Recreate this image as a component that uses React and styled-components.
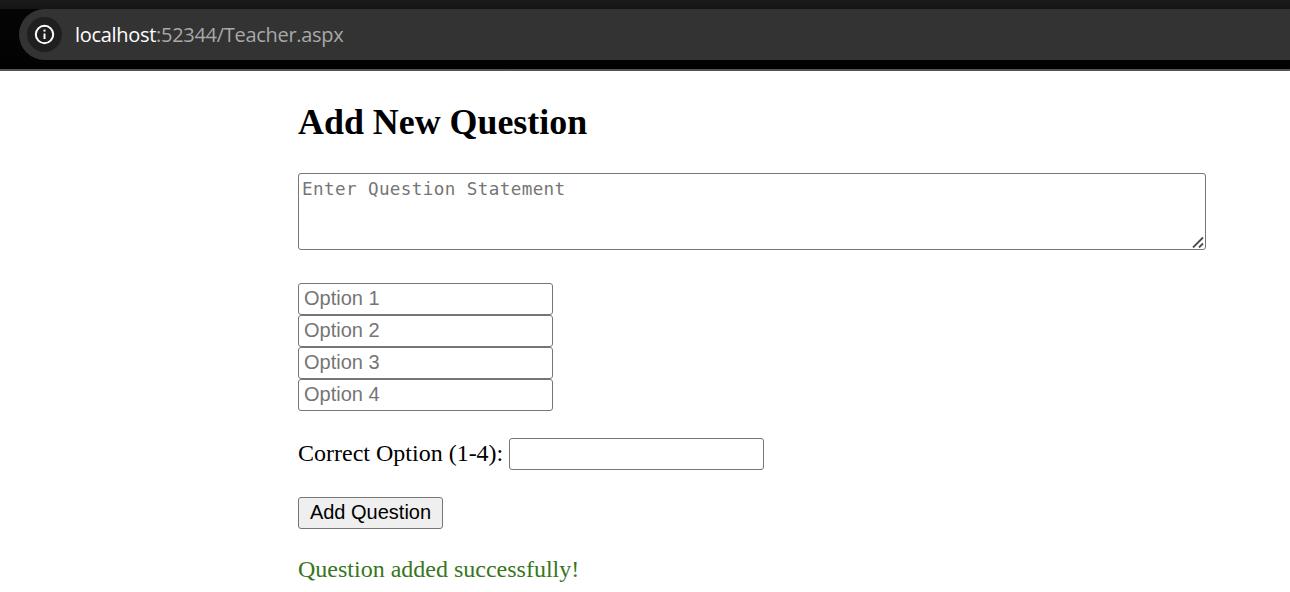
import React from "react";
import styled, { createGlobalStyle } from "styled-components";

const Global = createGlobalStyle`
  html, body { margin: 0; padding: 0; background: #fff; }
  body { font-family: "Liberation Serif", serif; color: #000; overflow: hidden; }
`;
const Page = styled.div`width: 1290px; height: 592px; overflow: hidden; display: flex; flex-direction: column;`;
const BrowserBar = styled.header`
  flex: none; box-sizing: border-box; height: 71px;
  border-bottom: 2px solid #555;
  background: linear-gradient(180deg, #1b1b1b 0, #151515 9px, #050505 9px, #020202 100%);
  padding: 9px 0 9px 19px;
  display: flex;
`;
const AddressPill = styled.div`
  flex: 1; height: 51px; background: #333; border-radius: 26px 0 0 26px;
  display: flex; align-items: center; padding-left: 8px; gap: 13px;
`;
const InfoBadge = styled.div`
  width: 35px; height: 35px; border-radius: 50%; background: #1f1f1f;
  display: flex; align-items: center; justify-content: center; flex: none;
`;
const Url = styled.div`font-family: "Open Sans", sans-serif; font-size: 20px; letter-spacing: -0.3px; color: #a8a8a8;`;
const Host = styled.span`color: #fff;`;
const Main = styled.main`padding: 0 84px 0 298px; display: flex; flex-direction: column; align-items: flex-start;`;
const Title = styled.h1`font-size: 35.9px; line-height: 40px; margin: 31px 0 31px; font-weight: bold;`;
const StatementWrap = styled.div`position: relative; width: 908px; height: 77px; margin: 0 0 33px;`;
const Statement = styled.textarea`
  display: block; box-sizing: border-box; width: 100%; height: 100%; margin: 0; resize: none;
  border: 1px solid #767676; border-radius: 3px; padding: 3px;
  font-family: "DejaVu Sans Mono", monospace; font-size: 17.6px; letter-spacing: 0.39px; line-height: 24px;
  outline: none;
  &::placeholder { color: #757575; opacity: 1; }
`;
const Grip = styled.svg`position: absolute; right: 2px; bottom: 2px; width: 12px; height: 12px; pointer-events: none;`;
const Field = styled.input`
  display: block; box-sizing: border-box; width: 255px; height: 32px; margin: 0;
  border: 1px solid #767676; border-radius: 3px; padding: 0 5px 2px;
  font-family: "Liberation Sans", sans-serif; font-size: 20px;
  outline: none;
  &::placeholder { color: #757575; opacity: 1; }
`;
const Options = styled.div`display: flex; flex-direction: column;`;
const CorrectRow = styled.div`display: flex; align-items: center; gap: 6px; margin-top: 27px; height: 32px;`;
const Label = styled.label`font-size: 24px; line-height: 32px; position: relative; top: -1px;`;
const Submit = styled.button`
  box-sizing: border-box; width: 145px; height: 32px; margin-top: 27px; padding: 0 0 2px;
  background: #efefef; border: 1px solid #767676; border-radius: 3px;
  font-family: "Liberation Sans", sans-serif; font-size: 20px; color: #000;
`;
const Success = styled.p`margin: 26px 0 0; font-size: 24px; line-height: 28px; color: #38761d;`;

export default function App() {
  return (
    <Page>
      <Global />
      <BrowserBar>
        <AddressPill>
          <InfoBadge>
            <svg width="21" height="21" viewBox="0 0 21 21" fill="none" stroke="#fff" strokeWidth="2">
              <circle cx="10.5" cy="10.5" r="8.7" />
              <path d="M10.5 9.5v5.5" />
              <path d="M10.5 5.6v2" />
            </svg>
          </InfoBadge>
          <Url><Host>localhost</Host>:52344/Teacher.aspx</Url>
        </AddressPill>
      </BrowserBar>
      <Main>
        <Title>Add New Question</Title>
        <StatementWrap>
          <Statement placeholder="Enter Question Statement" />
          <Grip viewBox="0 0 12 12" fill="none" stroke="#4a4a4a" strokeWidth="1.8">
            <path d="M1 11.5 11 1.5" />
            <path d="M7 11.5 11 7.5" />
          </Grip>
        </StatementWrap>
        <Options>
          <Field placeholder="Option 1" />
          <Field placeholder="Option 2" />
          <Field placeholder="Option 3" />
          <Field placeholder="Option 4" />
        </Options>
        <CorrectRow>
          <Label>Correct Option (1-4):</Label>
          <Field />
        </CorrectRow>
        <Submit>Add Question</Submit>
        <Success>Question added successfully!</Success>
      </Main>
    </Page>
  );
}
